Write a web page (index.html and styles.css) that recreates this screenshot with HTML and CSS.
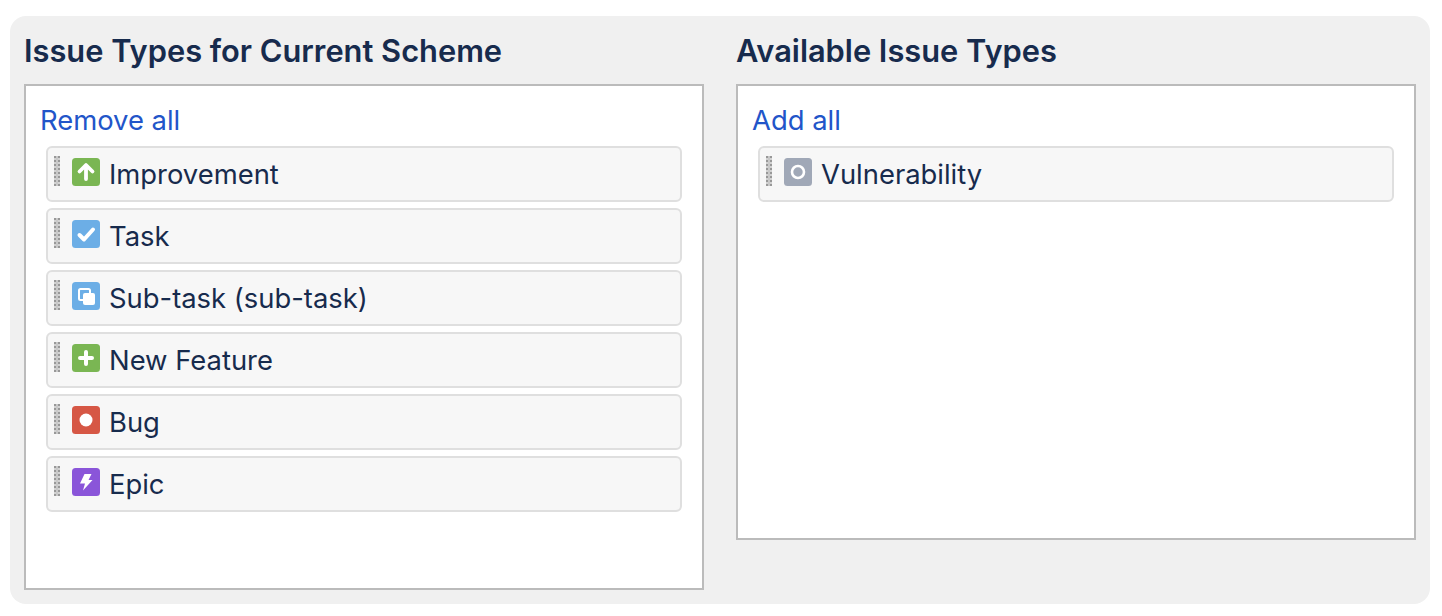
FILE: index.html
```html
<!DOCTYPE html>
<html lang="en">
<head>
<meta charset="utf-8">
<title>Issue Types</title>
<link rel="stylesheet" href="styles.css">
</head>
<body>
<main class="panel">
  <section class="col">
    <h2 class="title">Issue Types for Current Scheme</h2>
    <div class="box box-left">
      <a class="link" href="#">Remove all</a>
      <ul class="list">
        <li class="item"><span class="grip"></span>
          <svg class="icon" viewBox="0 0 28 28"><rect width="28" height="28" rx="3.500" fill="#7ab653"/><path d="M14 21V8M7.500 13.500 14 7 20.500 13.500" fill="none" stroke="#fff" stroke-width="3.800" stroke-linecap="round" stroke-linejoin="round"/></svg>
          <span class="label">Improvement</span></li>
        <li class="item"><span class="grip"></span>
          <svg class="icon" viewBox="0 0 28 28"><rect width="28" height="28" rx="3.500" fill="#6caee6"/><path d="M7.500 15 12 19.500 21 9.500" fill="none" stroke="#fff" stroke-width="4" stroke-linecap="round" stroke-linejoin="round"/></svg>
          <span class="label">Task</span></li>
        <li class="item"><span class="grip"></span>
          <svg class="icon" viewBox="0 0 28 28"><rect width="28" height="28" rx="3.500" fill="#6caee6"/><rect x="7" y="7" width="11" height="11" rx="1.500" fill="none" stroke="#fff" stroke-width="2"/><rect x="11" y="11" width="12" height="12" rx="2" fill="#fff"/></svg>
          <span class="label">Sub-task (sub-task)</span></li>
        <li class="item"><span class="grip"></span>
          <svg class="icon" viewBox="0 0 28 28"><rect width="28" height="28" rx="3.500" fill="#7ab653"/><path d="M14 8v12M8 14h12" fill="none" stroke="#fff" stroke-width="4" stroke-linecap="round"/></svg>
          <span class="label">New Feature</span></li>
        <li class="item"><span class="grip"></span>
          <svg class="icon" viewBox="0 0 28 28"><rect width="28" height="28" rx="3.500" fill="#d65745"/><circle cx="14" cy="14" r="6.500" fill="#fff"/></svg>
          <span class="label">Bug</span></li>
        <li class="item"><span class="grip"></span>
          <svg class="icon" viewBox="0 0 28 28"><rect width="28" height="28" rx="3.500" fill="#8a55d9"/><path d="M12.500 6H19.500L16.500 12H20.500L11 22.500 13 15.500H8z" fill="#fff"/></svg>
          <span class="label">Epic</span></li>
      </ul>
    </div>
  </section>
  <section class="col">
    <h2 class="title">Available Issue Types</h2>
    <div class="box box-right">
      <a class="link" href="#">Add all</a>
      <ul class="list">
        <li class="item"><span class="grip"></span>
          <svg class="icon" viewBox="0 0 28 28"><rect width="28" height="28" rx="3.500" fill="#a0a8b7"/><circle cx="14" cy="14" r="6" fill="none" stroke="#fff" stroke-width="2.600"/></svg>
          <span class="label">Vulnerability</span></li>
      </ul>
    </div>
  </section>
</main>
</body>
</html>
```
FILE: styles.css
```css
* { box-sizing: border-box; }
html, body { margin: 0; padding: 0; background: #fff; }
body { font-family: Inter, "Liberation Sans", sans-serif; color: #172b4d; }
.panel {
  display: flex;
  gap: 32px;
  width: 1420px;
  height: 588px;
  margin: 16px 0 0 10px;
  padding: 0 14px;
  background: #f0f0f0;
  border-radius: 16px;
}
.col { width: 680px; flex: none; }
.title {
  margin: 0;
  height: 68px;
  padding-top: 16px;
  font-size: 30.800px;
  line-height: 38px;
  font-weight: 600;
  color: #172b4d;
}
.box {
  background: #fff;
  border: 2px solid #bbb;
  padding: 16px 20px 0 14px;
}
.box-left { height: 506px; }
.box-right { height: 456px; }
.link {
  display: block;
  font-size: 27.400px;
  line-height: 36px;
  color: #2255c9;
  text-decoration: none;
}
.list {
  list-style: none;
  margin: 8px 0 0;
  padding: 0 0 0 6px;
  display: flex;
  flex-direction: column;
  gap: 6px;
}
.item {
  display: flex;
  align-items: flex-start;
  height: 56px;
  background: #f7f7f7;
  border: 2px solid #dfdfdf;
  border-radius: 6px;
  padding: 8px 0 0 6px;
}
.grip {
  width: 6px;
  height: 30px;
  margin-right: 12px;
  background-image:
    linear-gradient(90deg, transparent 0 2px, #c8c8c8 2px 4px, transparent 4px 6px),
    linear-gradient(#989898 0 2px, #d2d2d2 2px 4px);
  background-size: 6px 4px;
}
.icon { width: 28px; height: 28px; flex: none; display: block; margin: 2px 9px 0 0; }
.label { font-size: 27.400px; line-height: 37px; color: #172b4d; }
```
